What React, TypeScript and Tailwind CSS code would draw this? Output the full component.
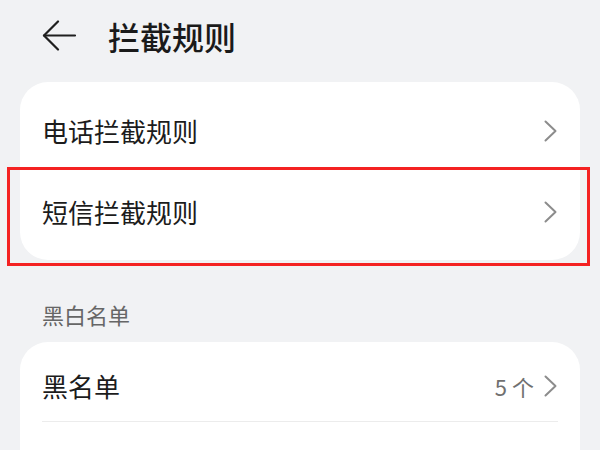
import React from 'react'

const FONT = { fontFamily: '"Noto Sans CJK SC", "Noto Sans", sans-serif' }

function Chevron() {
  return (
    <svg width="13" height="22" viewBox="0 0 13 22" fill="none" stroke="#8c8c8c" strokeWidth="2" strokeLinecap="round" strokeLinejoin="round">
      <path d="M1.5 1.5 L11.5 11 L1.5 20.5" />
    </svg>
  )
}

function BackArrow() {
  return (
    <svg width="35" height="31" viewBox="0 0 35 31" fill="none" stroke="#1f1f1f" strokeWidth="2.2" strokeLinecap="round" strokeLinejoin="round">
      <path d="M2 15.5 H33" />
      <path d="M16 1.5 L2 15.5 L16 29.5" />
    </svg>
  )
}

function Row({ label, extra }: { label: string; extra?: string }) {
  return (
    <div className="flex items-center justify-between pl-[22px] pr-[23px]">
      <span className="text-[26px] leading-[36px] text-[#1c1c1c]">{label}</span>
      <div className="flex items-center gap-[10px]">
        {extra && <span className="text-[22px] leading-[30px] text-[#707070]">{extra}</span>}
        <Chevron />
      </div>
    </div>
  )
}

export default function App() {
  return (
    <div className="relative w-[600px] h-[450px] overflow-hidden bg-[#f1f2f4]" style={FONT}>
      <div className="flex items-center h-[70px] pl-[42px] gap-[31px]">
        <BackArrow />
        <h1 className="text-[32px] leading-[40px] font-medium text-[#1a1a1a] mt-[2px]">拦截规则</h1>
      </div>

      <div className="mx-[20px] mt-[12px] rounded-[28px] bg-white py-[8px]">
        <div className="h-[81px] flex flex-col justify-center">
          <Row label="电话拦截规则" />
        </div>
        <div className="h-[81px] flex flex-col justify-center">
          <Row label="短信拦截规则" />
        </div>
      </div>

      <div className="pl-[42px] mt-[39px] text-[22px] leading-[30px] text-[#666]">黑白名单</div>

      <div className="mx-[20px] mt-[13px] rounded-[28px] bg-white pt-[8px] h-[200px]">
        <div className="h-[71px] flex flex-col justify-center">
          <Row label="黑名单" extra="5 个" />
        </div>
        <div className="mx-[22px] h-px bg-[#ececec]" />
      </div>

      {/* highlight frame */}
      <div className="absolute left-[7px] top-[167px] w-[583px] h-[99px] border-[3px] border-[#f42222]" />
    </div>
  )
}
